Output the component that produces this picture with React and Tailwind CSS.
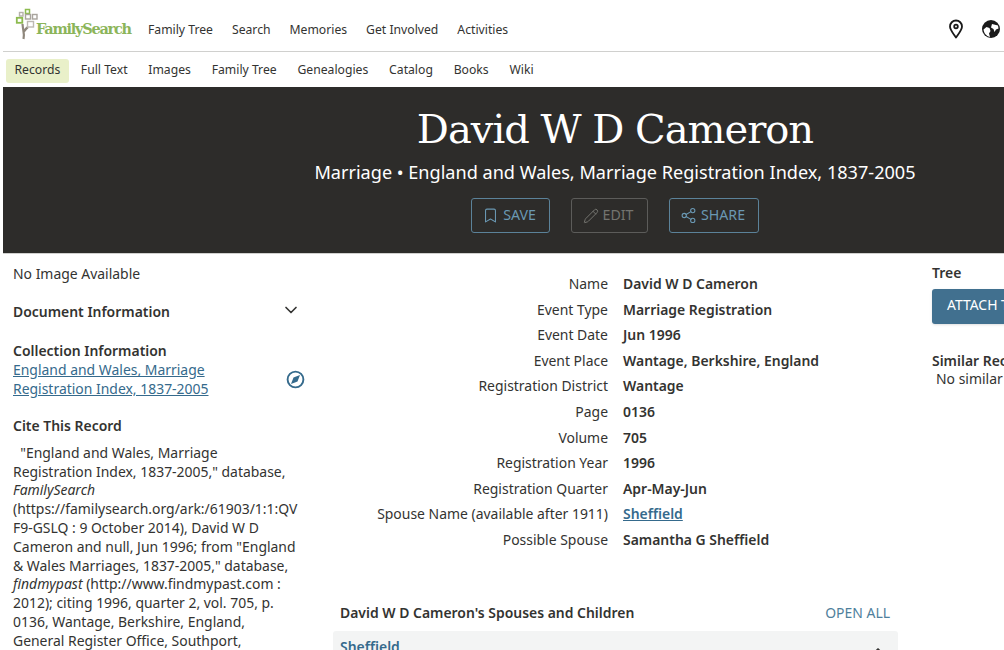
import React from 'react'
import { Bookmark, Pencil, Share2, ChevronDown, ChevronUp } from 'lucide-react'

const topNav = ['Family Tree', 'Search', 'Memories', 'Get Involved', 'Activities']
const subNav = ['Full Text', 'Images', 'Family Tree', 'Genealogies', 'Catalog', 'Books', 'Wiki']

const facts = [
  ['Name', 'David W D Cameron'],
  ['Event Type', 'Marriage Registration'],
  ['Event Date', 'Jun 1996'],
  ['Event Place', 'Wantage, Berkshire, England'],
  ['Registration District', 'Wantage'],
  ['Page', '0136'],
  ['Volume', '705'],
  ['Registration Year', '1996'],
  ['Registration Quarter', 'Apr-May-Jun'],
  ['Spouse Name (available after 1911)', 'Sheffield', true],
  ['Possible Spouse', 'Samantha G Sheffield'],
]

const Logo = () => (
  <svg width="24" height="33" viewBox="0 0 24 33" className="shrink-0" fill="none">
    <path d="M8.5 32c.8-3 .4-6-.2-9-.4-2-.6-4-.8-6M8.5 25c1.5-2 3-4 4.500-5" stroke="#8f877c" strokeWidth="2.2" />
    <rect x="10.500" y="2.500" width="4" height="4" stroke="#8dbb4f" strokeWidth="1.5" />
    <rect x="4.500" y="5.500" width="3.500" height="3.500" stroke="#b5b1aa" strokeWidth="1.4" />
    <rect x="10.500" y="7.500" width="5" height="4.500" stroke="#a8a49d" strokeWidth="1.4" />
    <rect x="17.500" y="7.500" width="4.500" height="4.500" stroke="#a8a49d" strokeWidth="1.4" />
    <rect x="1.800" y="10.800" width="5.500" height="5" stroke="#8dbb4f" strokeWidth="1.800" />
    <rect x="12.500" y="14.500" width="6" height="5.500" stroke="#bdb9b2" strokeWidth="1.400" />
  </svg>
)

const Pin = () => (
  <svg width="16" height="20" viewBox="0 0 16 20" fill="none" stroke="#1a1a1a" strokeWidth="1.8">
    <path d="M8 18.500C5 14 2 11 2 7.500a6 6 0 0 1 12 0C14 11 11 14 8 18.500z" strokeLinejoin="round" />
    <circle cx="8" cy="7.500" r="1.800" />
  </svg>
)

const Globe = () => (
  <svg width="18" height="18" viewBox="0 0 18 18" className="shrink-0">
    <circle cx="9" cy="9" r="9" fill="#1a1a1a" />
    <path d="M1.500 9.500l3-2.500 3 1 1 3-1.500 2.500 1 3.500C4 16 2 13 1.500 9.500z" fill="#fff" />
    <path d="M10 4l6 1.500 .5 3-2.500 1-1.500 2.500-1-3-2.500-1.500z" fill="#fff" />
  </svg>
)

const CompassIcon = () => (
  <svg width="19" height="19" viewBox="0 0 19 19" className="shrink-0 -mt-[2px] text-[#356a8c]">
    <circle cx="9.500" cy="9.500" r="7.900" fill="none" stroke="currentColor" strokeWidth="1.900" />
    <path d="M14 5l-2.500 6.500-6.500 2.500 2.500-6.500z" fill="currentColor" />
  </svg>
)

const OutlineButton = ({ icon, label, muted, className }) => (
  <div className={`flex items-center justify-center gap-[4px] h-[35px] pr-[3px] border rounded-[3px] text-[14.2px] ${muted ? 'border-[#5c5c5a] text-[#74746f]' : 'border-[#5b8299] text-[#6a98b3]'} ${className}`}>
    {icon}
    <span className="-mt-[1px]">{label}</span>
  </div>
)

export default function App() {
  return (
    <div className="w-[1004px] h-[650px] overflow-hidden bg-white text-[#333331] font-['Noto_Sans',sans-serif] text-[13.95px]">
      <div className="flex items-center h-[52px] ml-[3px] border-b border-[#d0d0ce]">
        <div className="flex items-start ml-[12px] w-[133px] h-[33px] -mt-[5px]">
          <Logo />
          <span className="ml-[-3px] mt-[13px] text-[#8cb55a] font-bold text-[14.5px] leading-[18px] tracking-[-1.25px] font-['DejaVu_Serif',serif]">FamilySearch</span>
        </div>
        <div className="flex gap-[19px] mt-[9px] text-[12.2px]">
          {topNav.map((item) => (
            <span key={item}>{item}</span>
          ))}
        </div>
        <div className="flex items-center gap-[18px] ml-auto mr-[4px] mt-[6px]">
          <Pin />
          <Globe />
        </div>
      </div>

      <div className="flex items-center h-[35px] pt-[2px] ml-[3px] text-[12.2px]">
        <span className="flex items-center h-[24px] px-[8.5px] ml-[3px] rounded-[3px] bg-[#e9f0c9]">Records</span>
        <div className="flex gap-[20.8px] ml-[12px]">
          {subNav.map((item) => (
            <span key={item}>{item}</span>
          ))}
        </div>
      </div>

      <div className="h-[167px] ml-[3px] pl-[223px] bg-[#2d2c2a] border-b border-[#d0d0ce] flex flex-col items-center text-white">
        <h1 className="mt-[17px] text-[40px] leading-[50px] font-['DejaVu_Serif',serif] tracking-[-1px]">David W D Cameron</h1>
        <div className="mt-[5px] text-[18.1px] leading-[26px]">Marriage • England and Wales, Marriage Registration Index, 1837-2005</div>
        <div className="flex gap-[21px] mt-[13px]">
          <OutlineButton className="w-[79px]" label="SAVE" icon={<Bookmark size={17} strokeWidth={1.5} />} />
          <OutlineButton className="w-[77px]" label="EDIT" muted icon={<Pencil size={16} strokeWidth={1.5} />} />
          <OutlineButton className="w-[90px]" label="SHARE" icon={<Share2 size={17} strokeWidth={1.5} />} />
        </div>
      </div>

      <div className="flex">
        <div className="w-[320px] shrink-0 pl-[13px] pt-[11px] leading-[18.8px]">
          <div>No Image Available</div>
          <div className="flex items-center justify-between mt-[19px] pr-[19px] font-semibold">
            <span>Document Information</span>
            <ChevronDown size={20} strokeWidth={2} className="text-[#333331] -mt-[4px]" />
          </div>
          <div className="mt-[20px] font-semibold">Collection Information</div>
          <div className="flex items-center justify-between pr-[15px] mt-[1px]">
            <a className="underline text-[#356a8c]">England and Wales, Marriage<br />Registration Index, 1837-2005</a>
            <CompassIcon />
          </div>
          <div className="mt-[18px] font-semibold">Cite This Record</div>
          <div className="mt-[8px]">
            &nbsp; "England and Wales, Marriage<br />
            Registration Index, 1837-2005," database,<br />
            <i>FamilySearch</i><br />
            (https://familysearch.org/ark:/61903/1:1:QV<br />
            F9-GSLQ : 9 October 2014), David W D<br />
            Cameron and null, Jun 1996; from "England<br />
            &amp; Wales Marriages, 1837-2005," database,<br />
            <i>findmypast</i> (http://www.findmypast.com :<br />
            2012); citing 1996, quarter 2, vol. 705, p.<br />
            0136, Wantage, Berkshire, England,<br />
            General Register Office, Southport,
          </div>
        </div>

        <div className="w-[578px] shrink-0 pl-[13px] pt-[17px]">
          {facts.map(([label, value, link]) => (
            <div key={label} className="flex h-[25.6px] leading-[25.6px] gap-[15px]">
              <div className="w-[275px] text-right shrink-0">{label}</div>
              <div className={link ? 'font-semibold underline text-[#356a8c]' : 'font-semibold'}>{value}</div>
            </div>
          ))}
          <div className="flex items-center justify-between mt-[50px] pl-[7px] pr-[8px]">
            <span className="font-semibold">David W D Cameron's Spouses and Children</span>
            <span className="text-[#4f7f9c]">OPEN ALL</span>
          </div>
          <div className="flex items-start justify-between mt-[8px] h-[40px] px-[7px] pt-[6px] rounded-[3px] bg-[#f3f4f4]">
            <span className="font-semibold text-[#356a8c]">Sheffield</span>
            <ChevronUp size={16} strokeWidth={2.5} className="mr-[5px] mt-[6px]" />
          </div>
        </div>

        <div className="pl-[34px] pt-[9px] whitespace-nowrap">
          <div className="font-semibold">Tree</div>
          <div className="flex items-center w-[90px] h-[35px] mt-[5px] pl-[15px] pb-[2px] rounded-[3px] bg-[#41708f] text-white shadow-sm">ATTACH TO</div>
          <div className="mt-[27px] font-semibold">Similar Records</div>
          <div className="pl-[4px] leading-[16px] -mt-[1px]">No similar records</div>
        </div>
      </div>
    </div>
  )
}
